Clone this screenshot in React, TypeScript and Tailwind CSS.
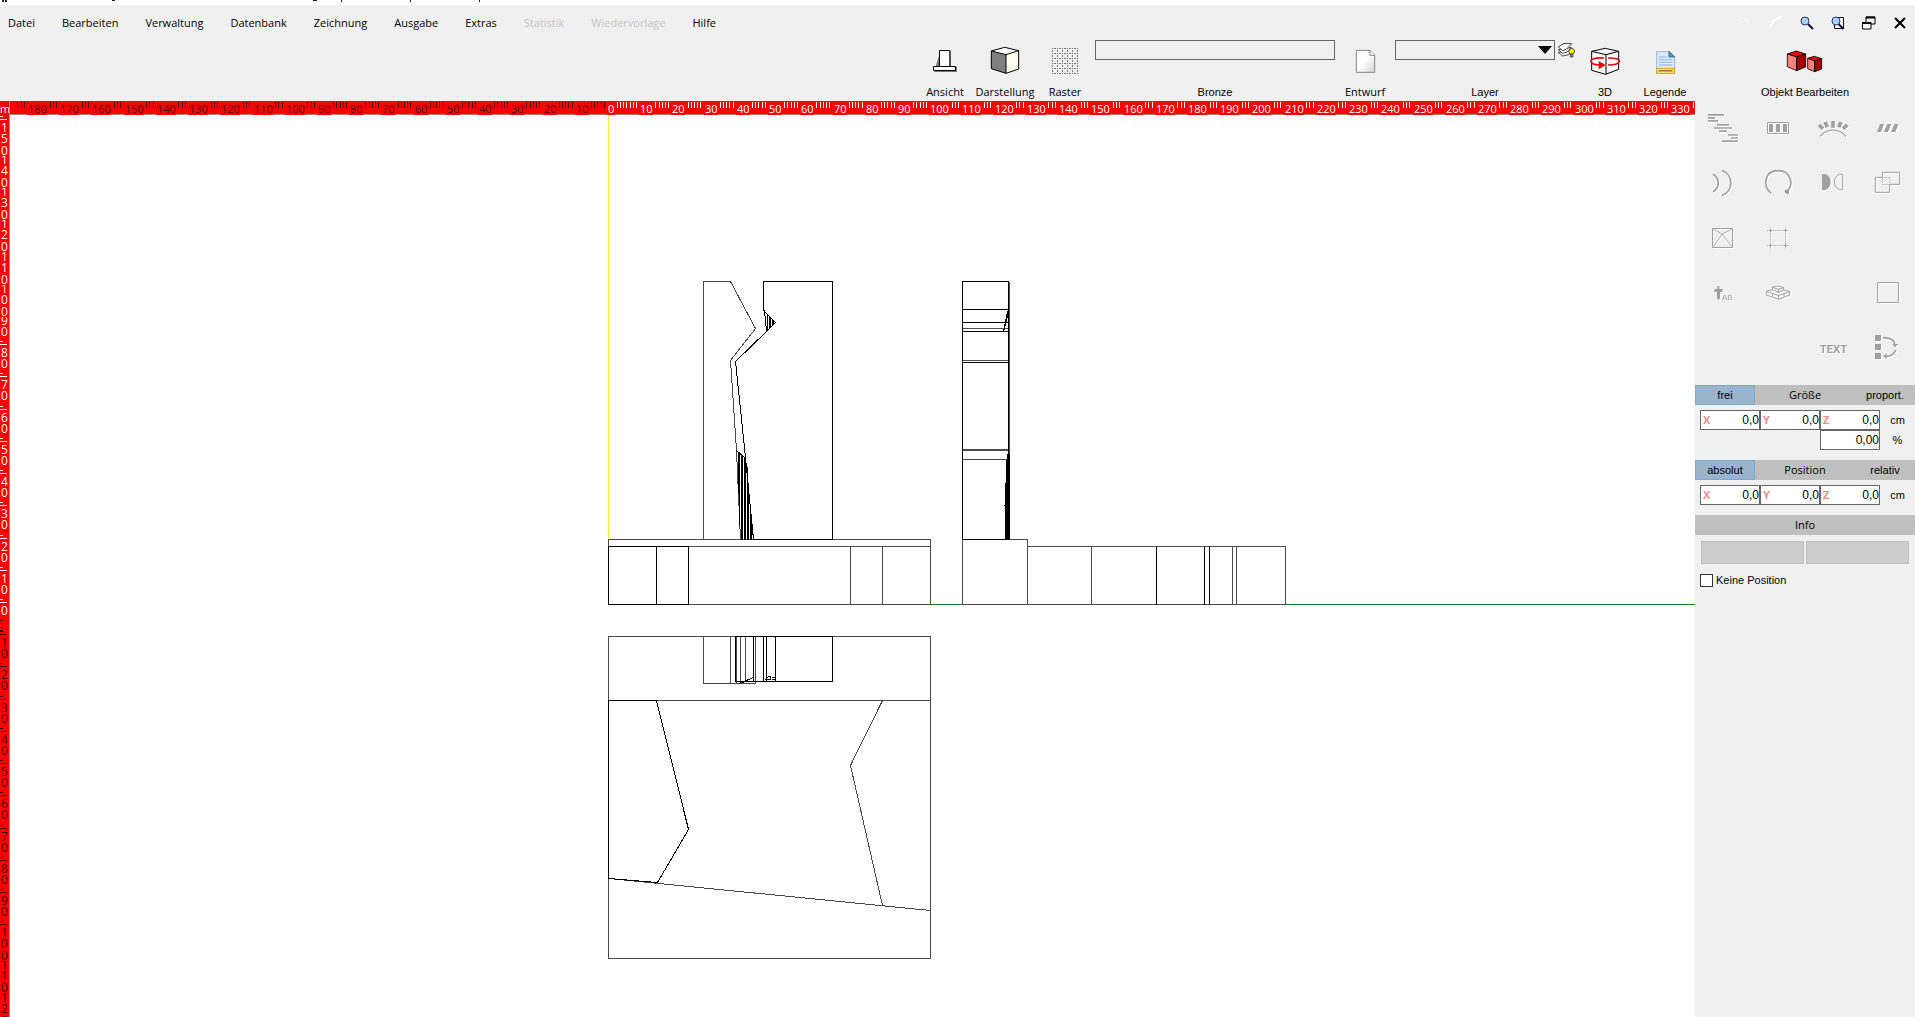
import React from "react";

const SANS = "font-['Open_Sans','Noto_Sans',sans-serif]";
const ORIGIN_X = 608;
const ORIGIN_Y = 604;
const STEP = 32.22;

const range = (from: number, to: number) =>
  Array.from({ length: to - from + 1 }, (_, i) => from + i);

/* ---------- rulers ---------- */

function HorizontalRuler() {
  return (
    <svg className="block h-[14px] w-full shrink-0 bg-[#ff0000]" shapeRendering="crispEdges" aria-label="Lineal horizontal">
      <rect x="0" y="0" width="100%" height="2" fill="#e60a0a" />
      <rect x="0" y="13" width="100%" height="1" fill="#b08080" />
      {range(-19, 33).map((k) => {
        const start = Math.round(ORIGIN_X + k * STEP);
        const label = String(Math.abs(k * 10));
        const colour = k < 0 ? "#4a0000" : "#ffffff";
        const first = 1 + label.length * 2;
        return (
          <g key={k}>
            {range(first, 9).map((t) => {
              const x = Math.round(ORIGIN_X - 1 + k * STEP + (t * STEP) / 10);
              return x > 9 && x < 1694 ? <rect key={t} x={x} y="1" width="1" height="6" fill={colour} /> : null;
            })}
            {k > -19 && (
              <>
                <rect x={start - 1} y="4" width={label.length * 6 + 2} height="10" fill="#ff0000" />
                <text x={start} y="12" fontSize="11" fill={colour} className={SANS}>
                  {label}
                </text>
              </>
            )}
          </g>
        );
      })}
      <rect x="0" y="0" width="9" height="14" fill="#ff0000" />
      <text x="0" y="12" fontSize="11" fill="#ffffff" className={SANS}>m</text>
      <rect x="9" y="0" width="1" height="14" fill="#c08080" />
    </svg>
  );
}

function VerticalRuler() {
  return (
    <svg className="block w-[10px] shrink-0 self-stretch bg-[#ff0000]" shapeRendering="crispEdges" aria-label="Lineal vertikal">
      <g transform="translate(0 -115)">
        {range(1, 4).map((t) => (
          <rect key={t} x="0" y={ORIGIN_Y + 13 + Math.round(t * 3.2)} width="3" height="1" fill="#4a0000" />
        ))}
        {range(-13, 15).map((v) => {
          const k = -v;
          const y = Math.round(ORIGIN_Y + k * STEP);
          const label = String(Math.abs(k * 10));
          const colour = k > 0 ? "#4a0000" : "#ffffff";
          return (
            <g key={k}>
              <rect x="0" y={y - 5} width="3" height="1" fill={colour} />
              <rect x="0" y={y - 2} width="7" height="1" fill={colour} />
              {label.split("").map((digit, i) => (
                <g key={i}>
                  <rect x="0" y={y + 1 + Math.round(i * 11.4)} width="9" height="11" fill="#ff0000" />
                  <text x="1" y={y + 11 + Math.round(i * 11.4)} fontSize="12" fill={colour} className={SANS}>
                    {digit}
                  </text>
                </g>
              ))}
            </g>
          );
        })}
      </g>
      <rect x="9" y="0" width="1" height="100%" fill="#e08080" />
    </svg>
  );
}

/* ---------- drawing ---------- */

function Drawing() {
  const grey = "#4b4b4b";
  return (
    <svg className="block min-w-0 flex-1 self-stretch bg-white" shapeRendering="crispEdges" aria-label="Zeichnung">
      <g transform="translate(-9.5 -114.5)" fill="none" strokeWidth="1">
        <path d="M608 114V539" stroke="#f5f032" />
        <path d="M930 604H962M1285 604H2600" stroke="#1e7d1e" />

        <g stroke={grey}>
          {/* front view */}
          <path d="M703 539V281H730L755 328L730 360L736 450L740 539" />
          <path d="M608 539H930V604H608ZM608 546H930M850 546V604M882 546V604" />
          {/* side view */}
          <path d="M962 539H1027V604H962ZM1027 546H1285V604H1027M1091 546V604M1232 546V604M1236 546V604" />
          <path d="M962 328H1008M962 360H1008M962 449H1008M962 450H1008M962 459H1008M1009 281V539" />
          {/* plan view */}
          <path d="M608 636H930V958H608ZM608 700H930" />
          <path d="M703 636V683H755V636M730 636V683M736 636V683M740 636V683M745 636V681" />
          <path d="M882 700L850 765L882 905M608 878L930 910" />
        </g>

        <g stroke="#000000">
          <path d="M763 281H832V539H753L745 457L735 361L766 331L775 322L763 310Z" />
          <path d="M764 310L766 331" />
          <path d="M767 313V330M769 315V328M770 316V327M772 318V325M773 320V324" />
          <path d="M738 452V493M739 452V525M741 454V539M742 455V539M744 456V539M745 458V539M741 494V539M747 466V539M748 490V539M750 505V539M751 516V539M736 450L745 458" />
          <path d="M608 546H688V604H608ZM656 546V604" />
          <path d="M962 539V281H1008V539ZM962 309H1008M962 322H1008M962 331H1008M962 362H1008" />
          <path d="M1008 311L1003 331M1007 311L1004 326" />
          <path d="M1156 546V604M1204 546V604M1209 546V604" />
          <path d="M735 636H832V681H735ZM753 636V681M763 636V681M766 636V681M775 636V681" />
          <path d="M738 683L753 677M742 682L748 680M764 680L768 676H770V679H765M771 677H774M771 679H774" />
          <path d="M608 878V700H656L688 829L657 882Z" />
        </g>
        <path d="M1007 453H1009V539H1004V505L1006 460Z" fill="#000000" />
      </g>
    </svg>
  );
}

/* ---------- toolbar icons (drawn on a sheet with three units per pixel) ---------- */

type IconProps = { box: string; className?: string; children: React.ReactNode };

function Icon({ box, className = "size-8", children }: IconProps) {
  return (
    <svg viewBox={box} className={`block shrink-0 ${className}`} fill="none" aria-hidden="true">
      {children}
    </svg>
  );
}

const ViewIcon = () => (
  <Icon box="87 135 96 96">
    <path d="M121 154H153V200H171V216H103V212" fill="#777" />
    <path d="M118.500 151.500H149.500V199.500H166.500V211.500H100.500V199.500H118.500Z" fill="#fff" />
    <path d="M118.500 199.500V151.500H149.500V199.500M100.500 199.500H166.500V211.500H100.500Z" stroke="#000" strokeWidth="3" />
  </Icon>
);

const CubeIcon = () => (
  <Icon box="267 135 96 96">
    <path d="M274 153L314 142L356 152L318 164Z" fill="#fff" />
    <path d="M274 153L318 164V220L274 206Z" fill="#808080" />
    <path d="M318 164L356 152V207L318 220Z" fill="#fffff0" />
    <path d="M274 153L314 142L356 152V207L318 220L274 206ZM274 153L318 164L356 152M318 164V220" stroke="#000" strokeWidth="3" />
  </Icon>
);

const GridIcon = () => (
  <Icon box="447 135 96 96">
    {range(0, 5).map((i) => (
      <g key={i} stroke="#777" strokeWidth="3">
        <path d={`M456 ${145.5 + i * 15}H535`} strokeDasharray="3 3 6 3" />
        <path d={`M${457.5 + i * 15} 144V222`} strokeDasharray="3 3 6 3" />
      </g>
    ))}
  </Icon>
);

const PageIcon = () => (
  <Icon box="1347 135 96 96">
    <defs>
      <linearGradient id="page" x1="0" y1="0" x2="1" y2="1">
        <stop offset="0.5" stopColor="#fdfdfd" />
        <stop offset="1" stopColor="#d4d4d4" />
      </linearGradient>
    </defs>
    <path d="M1369 151H1410L1424 165V217H1369Z" fill="url(#page)" stroke="#858585" strokeWidth="3" />
    <path d="M1410 151V166H1424" fill="#fff" stroke="#858585" strokeWidth="3" />
  </Icon>
);

const LayersIcon = () => (
  <Icon box="465 123 60 54" className="h-[18px] w-5">
    <g stroke="#222" strokeWidth="2.500" fill="#fff">
      <path d="M475 157L488 168L506 164L514 150L498 154Z" />
      <path d="M475 149L488 160L504 155L514 142L498 146Z" />
      <path d="M475 141L488 152L500 147L515 131L492 130Z" />
    </g>
    <circle cx="515" cy="154" r="8.500" fill="#ffff00" stroke="#222" strokeWidth="2.500" />
    <path d="M511 163H519V171H511Z" fill="#999" stroke="#222" strokeWidth="2" />
  </Icon>
);

const RotateIcon = () => (
  <Icon box="567 135 96 96">
    <path d="M575 154L616 145L656 154V208L617 223L575 211ZM575 154L618 164L656 154M618 164V223" fill="#f7f7f7" stroke="#000" strokeWidth="3" />
    <path d="M612 174C582 173 572 178 573 184C574 191 582 194 597 195M624 174C649 173 659 179 658 184C656 192 642 195 624 195" stroke="#e30613" strokeWidth="5" />
    <path d="M596 183L617 195L596 208Z" fill="#f00000" />
  </Icon>
);

const LegendIcon = () => (
  <Icon box="747 135 96 96">
    <path d="M770 155H808L824 170V220H770Z" fill="#dcebfb" stroke="#9bb8d8" strokeWidth="3" />
    <path d="M807 154V171H824Z" fill="#5b8fc5" stroke="#3e6f9f" strokeWidth="3" />
    <path d="M777 171H802M777 179H817M777 187H817M777 195H817" stroke="#a4c3e4" strokeWidth="4" />
    <path d="M770 205H824V220H770Z" fill="#ffe48a" stroke="#d8a400" strokeWidth="3" />
    <path d="M775 212.500H818" stroke="#5a4a20" strokeWidth="3" />
  </Icon>
);

const ObjectsIcon = () => (
  <Icon box="1155 135 120 96" className="h-8 w-10">
    <g stroke="#000" strokeWidth="2.500">
      <path d="M1162 162L1189 153L1217 162L1190 171Z" fill="#f00000" />
      <path d="M1162 162L1190 171V212L1162 200Z" fill="#ff8080" />
      <path d="M1190 171L1217 162V201L1190 212Z" fill="#a00000" />
      <path d="M1223 175L1243 169L1265 176L1244 183Z" fill="#f00000" />
      <path d="M1223 175L1244 183V215L1223 206Z" fill="#ff8080" />
      <path d="M1244 183L1265 176V207L1244 215Z" fill="#a00000" />
    </g>
  </Icon>
);

/* ---------- window icons ---------- */

const UndoIcon = () => (
  <Icon box="0 0 16 16" className="size-4">
    <path d="M1 5L5 2M4 3C8 2 12 6 13 10" stroke="#fafafa" />
  </Icon>
);
const RedoIcon = () => (
  <Icon box="0 0 16 16" className="size-4">
    <path d="M2 13C3 8 6 4 13 2" stroke="#fff" strokeWidth="1.500" />
  </Icon>
);
const SearchIcon = () => (
  <Icon box="0 0 16 16" className="size-4">
    <path d="M9 9L14 14" stroke="#0c1040" strokeWidth="2" />
    <circle cx="6" cy="6" r="4" fill="#a6d2ff" stroke="#2c3b6e" />
  </Icon>
);
const SearchPageIcon = () => (
  <Icon box="0 0 16 16" className="size-4">
    <path d="M6 2.500H13.500V13.500H4.500V10" fill="#fff" stroke="#111" />
    <path d="M8.500 9L13.500 14" stroke="#0c1040" strokeWidth="2" />
    <circle cx="6" cy="6" r="4" fill="#a6d2ff" stroke="#2c3b6e" />
  </Icon>
);
const RestoreIcon = () => (
  <Icon box="0 0 16 16" className="size-4">
    <path d="M5 7V2H14V9H10" stroke="#000" />
    <path d="M5 2.500H14" stroke="#000" strokeWidth="2" />
    <path d="M1.500 7.500H10V14H1.500Z" fill="#fff" stroke="#000" />
    <path d="M1 8H10" stroke="#000" strokeWidth="2" />
  </Icon>
);
const CloseIcon = () => (
  <Icon box="0 0 16 16" className="size-4">
    <path d="M3 3L13 13M13 3L3 13" stroke="#000" strokeWidth="2" />
  </Icon>
);

/* ---------- tool palette, one sheet of 165-unit cells ---------- */

const G = "#a0a0a0";

const tools: { name: string; col: number; row: number; art: React.ReactNode }[] = [
  {
    name: "Ausrichten", col: 0, row: 0,
    art: <path strokeWidth="5" d="M54 44.500H102M54 53.500H75M54 62.500H84M81 74.500H117M72 84H126M87 93.500H111M114 105H144M123 114H144M96 123.500H144" />,
  },
  {
    name: "Verteilen", col: 1, row: 0,
    art: (
      <>
        <path strokeWidth="3" d="M232.500 67.500H295.500V100.500H232.500Z" />
        <path strokeWidth="12" d="M243 72V96M264 72V96M285 72V96" />
      </>
    ),
  },
  {
    name: "Auf Bogen verteilen", col: 2, row: 0,
    art: (
      <>
        <path strokeWidth="4" d="M390 109C410 84 448 84 468 109" />
        <path strokeWidth="11" d="M387 75L399 86M405 66L412 82M429 63V83M453 66L446 82M472 75L459 86" />
      </>
    ),
  },
  {
    name: "Neigen", col: 3, row: 0,
    art: <path fill={G} stroke="none" d="M570 72H582L573 96H561ZM592 72H604L594 96H582ZM613 72H625L616 96H604Z" />,
  },
  {
    name: "Parallel", col: 0, row: 1,
    art: <path strokeWidth="5" d="M69 223C90 234 90 264 69 275M96 212C131 222 131 276 96 286" />,
  },
  {
    name: "Drehen", col: 1, row: 1,
    art: (
      <>
        <path strokeWidth="5" d="M244 280C218 263 220 212 264 212C307 212 313 262 287 277" />
        <path fill={G} stroke="none" d="M285 269H297V282H290L284 277Z" />
      </>
    ),
  },
  {
    name: "Spiegeln", col: 2, row: 1,
    art: (
      <>
        <path fill={G} stroke="none" d="M396 222H406C427 228 427 264 406 270H396Z" />
        <path strokeWidth="3" d="M458 223H449C428 229 428 263 449 269H458Z" />
      </>
    ),
  },
  {
    name: "Vereinen", col: 3, row: 1,
    art: (
      <>
        <path strokeWidth="3" d="M577 232V217H629V253H600M577 232H556V277H599V253" />
        <path strokeWidth="3" strokeDasharray="3 3" d="M577 232.500H600V253.500H577Z" />
      </>
    ),
  },
  {
    name: "Fläche", col: 0, row: 2,
    art: (
      <>
        <path strokeWidth="3" d="M67.500 385.500H127.500V442.500H67.500Z" />
        <path strokeWidth="2.500" d="M69 387L97 402L126 387M97 402L69 441M97 402L126 441" />
      </>
    ),
  },
  {
    name: "Beschneiden", col: 1, row: 2,
    art: (
      <>
        <path strokeWidth="3" strokeDasharray="3 3" d="M232 391.500H297M232 436.500H297M241.500 382V447M286.500 382V447" />
        <path strokeWidth="3" d="M237 391.500H246M282 391.500H291M237 436.500H246M282 436.500H291M241.500 387V396M286.500 387V396M241.500 432V441M286.500 432V441" />
      </>
    ),
  },
  {
    name: "Kreuz mit Schrift", col: 0, row: 3,
    art: (
      <>
        <path fill={G} stroke="none" d="M82 558H88V566L98 568V575L90 577V595L86 600L81 595V577L73 575V568L82 566Z" />
        <text x="96" y="599" fontSize="24" fill={G} stroke="none" className="font-['Liberation_Sans',sans-serif]">AB</text>
      </>
    ),
  },
  {
    name: "Sockel", col: 1, row: 3,
    art: <path strokeWidth="3" d="M229 574L247 569V562L263 558L281 563V570L299 575V585L266 598L229 585ZM229 574L266 587L299 575M266 587V598M247 569L266 577L281 570M247 562L266 568L281 563M266 568V577M248 580V590M282 580V590" />,
  },
  {
    name: "Rechteck", col: 3, row: 3,
    art: <path strokeWidth="3" d="M562.500 547.500H625.500V607.500H562.500Z" />,
  },
  {
    name: "Text", col: 2, row: 4,
    art: <text x="389" y="758" fontSize="34" fontWeight="700" fill={G} stroke="none" className="font-['Roboto',sans-serif]">TEXT</text>,
  },
  {
    name: "Reihenfolge", col: 3, row: 4,
    art: (
      <>
        <path fill={G} stroke="none" d="M555 705H573V723H555ZM555 732H573V750H555ZM555 759H573V777H555ZM606 732H625L615 742ZM579 769L590 760V777Z" />
        <path strokeWidth="5" d="M579 713C604 713 613 722 615 734M617 750C612 765 602 769 588 769" />
      </>
    ),
  },
];

function ToolPalette() {
  const cells = range(0, 19);
  return (
    <div className="grid grid-cols-4">
      {cells.map((i) => {
        const col = i % 4;
        const row = Math.floor(i / 4);
        const tool = tools.find((t) => t.col === col && t.row === row);
        if (!tool) return <span key={i} className="h-[55px]" />;
        return (
          <button key={i} type="button" disabled aria-label={tool.name} className="flex h-[55px] items-center justify-center">
            <svg
              viewBox={`${15 + col * 165} ${3 + row * 165} 165 165`}
              className="block size-[55px] drop-shadow-[1px_1px_0_#ffffff]"
              fill="none"
              stroke={G}
            >
              {tool.art}
            </svg>
          </button>
        );
      })}
    </div>
  );
}

/* ---------- property panel ---------- */

function TabHeader({ left, title, right }: { left: string; title: string; right: string }) {
  return (
    <div className="grid h-5 grid-cols-[60px_1fr_60px] bg-[#bfbfbf]">
      <button type="button" className="border border-[#7fa9cc] bg-[#9ab4cb] pt-px">{left}</button>
      <span className={`text-center text-[11px] leading-5 font-medium text-black ${SANS}`}>{title}</span>
      <button type="button" className="pt-px">{right}</button>
    </div>
  );
}

function AxisField({ axis, group }: { axis: string; group: string }) {
  return (
    <label className="flex h-5 w-[60px] items-center border border-[#666] bg-white pl-0.5">
      <span className={`text-[11px] font-bold text-[#ec8b8b] ${SANS}`}>{axis}</span>
      <input type="text" defaultValue="0,0" aria-label={`${group} ${axis}`} className="w-full min-w-0 bg-transparent text-right text-[12px] outline-none" />
    </label>
  );
}

function AxisRow({ group }: { group: string }) {
  return (
    <div className="flex items-center pl-[5px]">
      {["X", "Y", "Z"].map((axis) => (
        <AxisField key={axis} axis={axis} group={group} />
      ))}
      <span className="flex-1 text-center text-[11px]">cm</span>
    </div>
  );
}

function SidePanel() {
  return (
    <aside className="w-[220px] shrink-0 bg-[#f0f0f0]">
      <ToolPalette />
      <div className="mt-[9px]">
        <TabHeader left="frei" title="Größe" right="proport." />
        <div className="mt-[5px]">
          <AxisRow group="Größe" />
          <div className="flex items-center pl-[125px]">
            <input type="text" defaultValue="0,00" aria-label="Prozent" className="h-5 w-[60px] border border-[#666] bg-white text-right text-[12px] outline-none" />
            <span className="flex-1 text-center text-[11px]">%</span>
          </div>
        </div>
      </div>
      <div className="mt-2.5">
        <TabHeader left="absolut" title="Position" right="relativ" />
        <div className="mt-[5px]">
          <AxisRow group="Position" />
        </div>
      </div>
      <h2 className={`mt-2.5 h-5 bg-[#bfbfbf] text-center text-[11px] leading-5 font-medium text-black ${SANS}`}>Info</h2>
      <div className="mt-1.5 grid grid-cols-2 gap-0.5 px-1.5">
        <button type="button" aria-label="Info 1" className="h-[23px] border border-[#bfbfbf] bg-[#cccccc]" />
        <button type="button" aria-label="Info 2" className="h-[23px] border border-[#bfbfbf] bg-[#cccccc]" />
      </div>
      <label className="mt-2 flex items-center gap-[3px] pl-[5px] text-[11px]">
        <input type="checkbox" className="size-[13px] appearance-none border border-[#333] bg-white" />
        Keine Position
      </label>
    </aside>
  );
}

/* ---------- header ---------- */

const menu = [
  { label: "Datei" },
  { label: "Bearbeiten" },
  { label: "Verwaltung" },
  { label: "Datenbank" },
  { label: "Zeichnung" },
  { label: "Ausgabe" },
  { label: "Extras" },
  { label: "Statistik", disabled: true },
  { label: "Wiedervorlage", disabled: true },
  { label: "Hilfe" },
];

const windowButtons = [
  { label: "Rückgängig", icon: <UndoIcon /> },
  { label: "Wiederholen", icon: <RedoIcon /> },
  { label: "Suchen", icon: <SearchIcon /> },
  { label: "Seite suchen", icon: <SearchPageIcon /> },
  { label: "Wiederherstellen", icon: <RestoreIcon /> },
  { label: "Schließen", icon: <CloseIcon /> },
];

function ToolButton({ label, icon, className }: { label: string; icon: React.ReactNode; className: string }) {
  return (
    <button type="button" className={`flex flex-col items-center justify-between pt-[5px] whitespace-nowrap ${className}`}>
      {icon}
      <span className="leading-4">{label}</span>
    </button>
  );
}

function Header() {
  return (
    <header className="shrink-0">
      <svg className="block h-[5px] w-full bg-white" shapeRendering="crispEdges" aria-hidden="true">
        <path d="M2 0H4V2H2ZM5 0H7V2H5ZM112 0H115V1H112ZM313 0H317V1H313ZM341 0H342V2H341ZM410 0H411V2H410ZM479 0H480V2H479Z" fill="#222" />
      </svg>
      <div className="flex h-[35px] items-center justify-between bg-[#f0f0f0] pl-2">
        <nav className={`flex gap-[27px] pt-px text-[11px] text-black ${SANS}`}>
          {menu.map((m) => (
            <button key={m.label} type="button" disabled={m.disabled} className="disabled:text-[#c4c4c4]">
              {m.label}
            </button>
          ))}
        </nav>
        <div className="flex gap-[15px] pr-[7px]">
          {windowButtons.map((b) => (
            <button key={b.label} type="button" aria-label={b.label}>
              {b.icon}
            </button>
          ))}
        </div>
      </div>
      <div className="flex h-[61px] justify-end bg-[#f0f0f0] pb-px text-[11px]">
        <ToolButton label="Ansicht" icon={<ViewIcon />} className={`w-[60px] ${SANS}`} />
        <ToolButton label="Darstellung" icon={<CubeIcon />} className={`w-[60px] ${SANS}`} />
        <ToolButton label="Raster" icon={<GridIcon />} className={`w-[60px] ${SANS}`} />
        <label className="flex w-60 flex-col items-center justify-between">
          <input type="text" className="h-5 w-full border border-[#666] bg-[#f0f0f0] px-1 outline-none" />
          <span className="leading-4">Bronze</span>
        </label>
        <ToolButton label="Entwurf" icon={<PageIcon />} className={`w-[60px] ${SANS}`} />
        <div className="flex w-[180px] flex-col items-center justify-between">
          <div className="flex w-full items-center">
            <div className="relative flex-1">
              <select id="layer" className="block h-5 w-full appearance-none border border-[#666] bg-[#f0f0f0] px-1 outline-none">
                <option></option>
              </select>
              <svg viewBox="0 0 14 8" className="pointer-events-none absolute top-1.5 right-[3px] h-2 w-3.5" aria-hidden="true">
                <path d="M0 0H14L7 8Z" />
              </svg>
            </div>
            <button type="button" aria-label="Layer anzeigen">
              <LayersIcon />
            </button>
          </div>
          <label htmlFor="layer" className="leading-4">Layer</label>
        </div>
        <ToolButton label="3D" icon={<RotateIcon />} className="w-[60px]" />
        <ToolButton label="Legende" icon={<LegendIcon />} className="w-[60px]" />
        <ToolButton label="Objekt Bearbeiten" icon={<ObjectsIcon />} className="w-[220px]" />
      </div>
    </header>
  );
}

export default function App() {
  return (
    <div className="flex h-screen flex-col overflow-hidden bg-white font-['Liberation_Sans',Arial,sans-serif] text-[11px] text-black">
      <Header />
      <div className="flex min-h-0 flex-1">
        <main className="flex min-w-0 flex-1 flex-col overflow-hidden">
          <HorizontalRuler />
          <div className="flex min-h-0 flex-1">
            <VerticalRuler />
            <Drawing />
          </div>
        </main>
        <SidePanel />
      </div>
    </div>
  );
}
